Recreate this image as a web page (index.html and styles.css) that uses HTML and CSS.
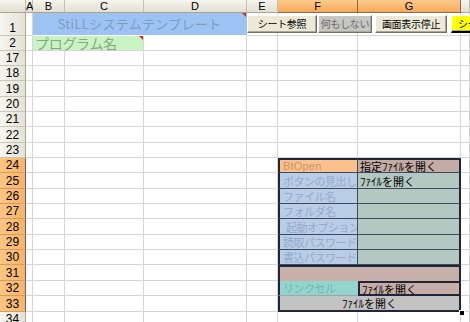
FILE: index.html
```html
<!DOCTYPE html>
<html lang="ja">
<head>
<meta charset="utf-8">
<title>StiLL</title>
<link rel="stylesheet" href="styles.css">
</head>
<body>
<div class="sheet">
  <!-- column headers -->
  <div class="ch corner"></div>
  <div class="ch">A</div>
  <div class="ch">B</div>
  <div class="ch">C</div>
  <div class="ch">D</div>
  <div class="ch">E</div>
  <div class="ch sel">F</div>
  <div class="ch sel">G</div>
  <div class="ch"></div>

  <!-- row 1 -->
  <div class="rh">1</div>
  <div class="c"></div>
  <div class="c title span3 note">StiLLシステムテンプレート</div>
  <div class="c"></div><div class="c"></div><div class="c"></div><div class="c"></div>

  <!-- row 2 -->
  <div class="rh">2</div>
  <div class="c"></div>
  <div class="c prog span2 note">プログラム名</div>
  <div class="c"></div><div class="c"></div><div class="c"></div><div class="c"></div><div class="c"></div>

  <div class="rh">17</div><div class="c"></div><div class="c"></div><div class="c"></div><div class="c"></div><div class="c"></div><div class="c"></div><div class="c"></div><div class="c"></div>
  <div class="rh">18</div><div class="c"></div><div class="c"></div><div class="c"></div><div class="c"></div><div class="c"></div><div class="c"></div><div class="c"></div><div class="c"></div>
  <div class="rh">19</div><div class="c"></div><div class="c"></div><div class="c"></div><div class="c"></div><div class="c"></div><div class="c"></div><div class="c"></div><div class="c"></div>
  <div class="rh">20</div><div class="c"></div><div class="c"></div><div class="c"></div><div class="c"></div><div class="c"></div><div class="c"></div><div class="c"></div><div class="c"></div>
  <div class="rh">21</div><div class="c"></div><div class="c"></div><div class="c"></div><div class="c"></div><div class="c"></div><div class="c"></div><div class="c"></div><div class="c"></div>
  <div class="rh">22</div><div class="c"></div><div class="c"></div><div class="c"></div><div class="c"></div><div class="c"></div><div class="c"></div><div class="c"></div><div class="c"></div>
  <div class="rh">23</div><div class="c"></div><div class="c"></div><div class="c"></div><div class="c"></div><div class="c"></div><div class="c"></div><div class="c"></div><div class="c"></div>

  <div class="rh sel">24</div><div class="c"></div><div class="c"></div><div class="c"></div><div class="c"></div><div class="c"></div>
  <div class="t f top btopen">BtOpen</div><div class="t g top rose">指定ﾌｧｲﾙを開く</div><div class="c"></div>

  <div class="rh sel">25</div><div class="c"></div><div class="c"></div><div class="c"></div><div class="c"></div><div class="c"></div>
  <div class="t f">ボタンの見出し</div><div class="t g">ﾌｧｲﾙを開く</div><div class="c"></div>

  <div class="rh sel">26</div><div class="c"></div><div class="c"></div><div class="c"></div><div class="c"></div><div class="c"></div>
  <div class="t f">ファイル名</div><div class="t g"></div><div class="c"></div>

  <div class="rh sel">27</div><div class="c"></div><div class="c"></div><div class="c"></div><div class="c"></div><div class="c"></div>
  <div class="t f">フォルダ名</div><div class="t g"></div><div class="c"></div>

  <div class="rh sel">28</div><div class="c"></div><div class="c"></div><div class="c"></div><div class="c"></div><div class="c"></div>
  <div class="t f indent">起動オプション</div><div class="t g"></div><div class="c"></div>

  <div class="rh sel">29</div><div class="c"></div><div class="c"></div><div class="c"></div><div class="c"></div><div class="c"></div>
  <div class="t f">読取パスワード</div><div class="t g"></div><div class="c"></div>

  <div class="rh sel">30</div><div class="c"></div><div class="c"></div><div class="c"></div><div class="c"></div><div class="c"></div>
  <div class="t f">書込パスワード</div><div class="t g"></div><div class="c"></div>

  <div class="rh sel">31</div><div class="c"></div><div class="c"></div><div class="c"></div><div class="c"></div><div class="c"></div>
  <div class="t blank span2"></div><div class="c"></div>

  <div class="rh sel">32</div><div class="c"></div><div class="c"></div><div class="c"></div><div class="c"></div><div class="c"></div>
  <div class="t f link">リンクセル</div><div class="t g linkval">ﾌｧｲﾙを開く</div><div class="c"></div>

  <div class="rh sel">33</div><div class="c"></div><div class="c"></div><div class="c"></div><div class="c"></div><div class="c"></div>
  <div class="t btnrow span2">ﾌｧｲﾙを開く</div><div class="c"></div>

  <div class="rh">34</div><div class="c"></div><div class="c"></div><div class="c"></div><div class="c"></div><div class="c"></div><div class="c"></div><div class="c"></div><div class="c"></div>

  <!-- floating buttons over row 1 -->
  <div class="btn b1">シート参照</div>
  <div class="btn b2">何もしない</div>
  <div class="btn b3">画面表示停止</div>
  <div class="btn b4">シート</div>
  <div class="handle"></div>
</div>
</body>
</html>
```

FILE: styles.css
```css
* { box-sizing: border-box; }
html, body { margin: 0; padding: 0; }
body {
  width: 470px;
  height: 322px;
  overflow: hidden;
  background: #fff;
  font-family: "Liberation Sans", "Noto Sans CJK JP", sans-serif;
  color: #000;
}
.sheet {
  position: relative;
  display: grid;
  grid-template-columns: 26px 7px 32px 79px 103px 31px 80px 103px 9px;
  grid-template-rows: 13px 23px 15px repeat(5, 15px 15px 16px) 15px 16px 15px;
}
.c {
  border-right: 1px solid #d6d6d6;
  border-bottom: 1px solid #d6d6d6;
}
.span2 { grid-column: span 2; }
.span3 { grid-column: span 3; }

/* headers */
.ch {
  background: linear-gradient(#f6f5ef, #e3e0d2);
  border-right: 1px solid #c5c1b0;
  border-bottom: 1px solid #a9a592;
  font-size: 11px;
  line-height: 12px;
  text-align: center;
}
.ch.sel {
  background: linear-gradient(#fbcb8f, #f7aa58);
  border-right-color: #8a6a48;
  border-bottom-color: #8a6a48;
}
.rh {
  background: linear-gradient(90deg, #f6f5ef, #e5e2d4);
  border-right: 1px solid #a9a592;
  border-bottom: 1px solid #cbc7b6;
  font-size: 12px;
  line-height: 14px;
  display: flex;
  align-items: flex-end;
  justify-content: center;
}
.rh.sel {
  background: linear-gradient(90deg, #fbc684, #f8b466);
  border-right-color: #6a5a7c;
  border-bottom-color: #dc9c58;
}

/* top cells */
.note { position: relative; }
.note::after {
  content: "";
  position: absolute;
  top: 0;
  right: 0;
  border-top: 4px solid #e02020;
  border-left: 4px solid transparent;
}
.title {
  background: #9cc3f3;
  color: #8299bf;
  font-family: "Noto Sans CJK JP", sans-serif;
  font-size: 13px;
  font-weight: 400;
  letter-spacing: 0.3px;
  line-height: 21px;
  text-align: center;
  border-right-color: #9cc3f3;
  border-bottom-color: #fff;
}
.prog {
  background: #caf3c4;
  color: #86a686;
  font-family: "Noto Sans CJK JP", sans-serif;
  font-size: 14px;
  line-height: 14px;
  padding-left: 2px;
  letter-spacing: -0.3px;
  white-space: nowrap;
}

/* buttons */
.btn {
  position: absolute;
  top: 15px;
  height: 18px;
  font-family: "Noto Sans CJK JP", sans-serif;
  font-size: 10px;
  letter-spacing: -0.3px;
  line-height: 16px;
  text-align: center;
  background: #ece9d8;
  border: 1px solid;
  border-color: #ffffff #716f64 #716f64 #ffffff;
  box-shadow: inset -1px -1px 0 #aca899;
  white-space: nowrap;
  overflow: hidden;
}
.b1 { left: 247px; width: 70px; }
.b2 { left: 318px; width: 54px; background: #c6c6c2; color: #6a6a6a; }
.b3 { left: 375px; width: 72px; }
.b4 { left: 451px; width: 30px; background: #ffff00; border-bottom: 2px solid #000; text-align: left; padding-left: 6px; }

/* table block F24:G33 */
.t {
  font-family: "Noto Sans CJK JP", sans-serif;
  white-space: nowrap;
  overflow: hidden;
  display: flex;
  align-items: center;
}
.f {
  background: #b9cde6;
  color: #94aacb;
  font-size: 11px;
  letter-spacing: -0.5px;
  padding-left: 3px;
  border-left: 2px solid #1e2638;
  border-right: 1px solid #3e4862;
  border-bottom: 1px solid #3e4862;
}
.indent { padding-left: 6px; }
.g {
  background: #b3c8c1;
  font-size: 11px;
  padding-left: 2px;
  border-right: 2px solid #1e2638;
  border-bottom: 1px solid #3e4862;
}
.top { border-top: 2px solid #1e2638; }
.btopen {
  background: #fbc08c;
  color: #c9936c;
  font-family: "Liberation Sans", sans-serif;
  font-size: 11px;
  letter-spacing: 0.2px;
}
.rose { background: #c4aba4; }
.blank {
  background: #c7b0aa;
  border-top: 2px solid #1e2638;
  border-left: 2px solid #1e2638;
  border-right: 2px solid #1e2638;
}
.link {
  background: #93d5ce;
  color: #6eb6b2;
  border-right-color: #93d5ce;
  border-bottom: 1px solid #9aa;
}
.linkval {
  background: #c6ada8;
  border: 2px solid #1e2638;
}
.btnrow {
  background: #c2c2c2;
  font-size: 11px;
  justify-content: center;
  border-left: 2px solid #1e2638;
  border-right: 2px solid #1e2638;
  border-bottom: 2px solid #1e2638;
}
.handle {
  position: absolute;
  left: 459px;
  top: 310px;
  width: 6px;
  height: 6px;
  background: #000;
  border: 1px solid #fff;
}
```
